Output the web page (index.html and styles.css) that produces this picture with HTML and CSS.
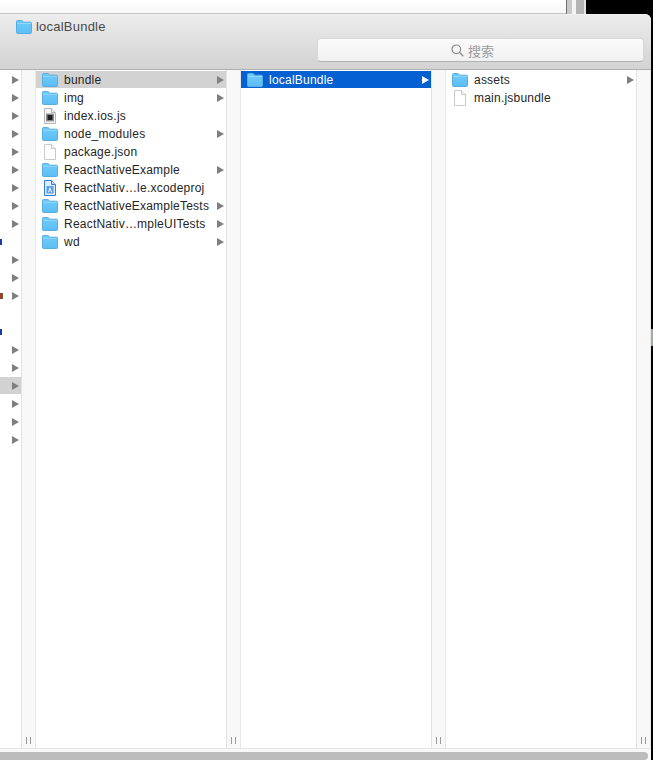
FILE: index.html
```html
<!DOCTYPE html>
<html lang="zh">
<head>
<meta charset="utf-8">
<title>localBundle</title>
<link rel="stylesheet" href="styles.css">
</head>
<body>
<svg class="defs" width="0" height="0" aria-hidden="true">
  <defs>
    <linearGradient id="fg" x1="0" y1="0" x2="0" y2="1"><stop offset="0" stop-color="#6fcbfb"/><stop offset="1" stop-color="#5dbdf3"/></linearGradient>
    <symbol id="folder" viewBox="0 0 16 14">
      <path d="M.5 12.5V1.5a1 1 0 0 1 1-1h4.2a1 1 0 0 1 .7.3L7.8 2.2h6.7a1 1 0 0 1 1 1v9.3a1 1 0 0 1-1 1h-13a1 1 0 0 1-1-1z" fill="url(#fg)" stroke="#58aee0"/>
      <path d="M1 3.5h14" stroke="#8fd8fc" fill="none"/>
    </symbol>
    <symbol id="doc" viewBox="0 0 16 16">
      <path d="M2.500.5h7l4 4v11h-11z" fill="#fff" stroke="#c9c9c9"/>
      <path d="M9.500.5v4h4" fill="#f4f4f4" stroke="#c9c9c9"/>
    </symbol>
    <symbol id="js" viewBox="0 0 16 16">
      <path d="M2.500.5h7l4 4v11h-11z" fill="#f6f6f6" stroke="#b5b5b5"/>
      <path d="M9.500.5v4h4" fill="#eee" stroke="#b5b5b5"/>
      <rect x="4" y="5.500" width="8" height="8" fill="#8f8f8f"/>
      <rect x="5.500" y="7" width="5" height="5" fill="#222"/>
    </symbol>
    <symbol id="proj" viewBox="0 0 16 16">
      <path d="M2.500.5h7l4 4v11h-11z" fill="#dcedfc" stroke="#2f80dd"/>
      <path d="M9.500.5v4h4" fill="#bcdcf8" stroke="#2f80dd"/>
      <rect x="4.500" y="6" width="7" height="7.500" fill="#5d9fe6"/>
      <path d="M8 6.800l-2 5.500h1l1-2.800 1 2.800h1z" fill="#fff"/>
    </symbol>
  </defs>
</svg>

<div class="backdrop">
  <div class="bd bd-a"></div><div class="bd bd-b"></div><div class="bd bd-c"></div><div class="bd bd-d"></div><div class="bd bd-e"></div><div class="bd bd-f"></div>
</div>
<div class="edge-mark"></div>

<main class="dialog">
  <header class="head">
    <div class="title">
      <svg class="ic-title"><use href="#folder"/></svg>
      <span>localBundle</span>
    </div>
    <div class="search">
      <svg class="lens" viewBox="0 0 13 13"><circle cx="5.300" cy="5.300" r="4.300" fill="none" stroke="#8a8a8a" stroke-width="1.200"/><path d="M8.500 8.500l3.800 3.800" stroke="#8a8a8a" stroke-width="1.300"/></svg>
      <span>搜索</span>
    </div>
  </header>

  <div class="panes">
    <div class="pane pane-0">
      <div class="row"><i class="arrow"></i></div>
      <div class="row"><i class="arrow"></i></div>
      <div class="row"><i class="arrow"></i></div>
      <div class="row"><i class="arrow"></i></div>
      <div class="row"><i class="arrow"></i></div>
      <div class="row"><i class="arrow"></i></div>
      <div class="row"><i class="arrow"></i></div>
      <div class="row"><i class="arrow"></i></div>
      <div class="row"><i class="arrow"></i></div>
      <div class="row"><b class="frag frag-blue"></b></div>
      <div class="row"><i class="arrow"></i></div>
      <div class="row"><i class="arrow"></i></div>
      <div class="row"><b class="frag frag-red"></b><i class="arrow"></i></div>
      <div class="row"></div>
      <div class="row"><b class="frag frag-blue"></b></div>
      <div class="row"><i class="arrow"></i></div>
      <div class="row"><i class="arrow"></i></div>
      <div class="row row-grey"><i class="arrow"></i></div>
      <div class="row"><i class="arrow"></i></div>
      <div class="row"><i class="arrow"></i></div>
      <div class="row"><i class="arrow"></i></div>
    </div>
    <div class="strip"><u></u><u></u></div>

    <div class="pane">
      <div class="row row-grey"><svg class="ic ic-f"><use href="#folder"/></svg><span class="name">bundle</span><i class="arrow"></i></div>
      <div class="row"><svg class="ic ic-f"><use href="#folder"/></svg><span class="name">img</span><i class="arrow"></i></div>
      <div class="row"><svg class="ic"><use href="#js"/></svg><span class="name">index.ios.js</span></div>
      <div class="row"><svg class="ic ic-f"><use href="#folder"/></svg><span class="name">node_modules</span><i class="arrow"></i></div>
      <div class="row"><svg class="ic"><use href="#doc"/></svg><span class="name">package.json</span></div>
      <div class="row"><svg class="ic ic-f"><use href="#folder"/></svg><span class="name">ReactNativeExample</span><i class="arrow"></i></div>
      <div class="row"><svg class="ic"><use href="#proj"/></svg><span class="name">ReactNativ…le.xcodeproj</span></div>
      <div class="row"><svg class="ic ic-f"><use href="#folder"/></svg><span class="name">ReactNativeExampleTests</span><i class="arrow"></i></div>
      <div class="row"><svg class="ic ic-f"><use href="#folder"/></svg><span class="name">ReactNativ…mpleUITests</span><i class="arrow"></i></div>
      <div class="row"><svg class="ic ic-f"><use href="#folder"/></svg><span class="name">wd</span><i class="arrow"></i></div>
    </div>
    <div class="strip"><u></u><u></u></div>

    <div class="pane">
      <div class="row row-blue"><svg class="ic ic-f"><use href="#folder"/></svg><span class="name">localBundle</span><i class="arrow"></i></div>
    </div>
    <div class="strip"><u></u><u></u></div>

    <div class="pane">
      <div class="row"><svg class="ic ic-f"><use href="#folder"/></svg><span class="name">assets</span><i class="arrow"></i></div>
      <div class="row"><svg class="ic"><use href="#doc"/></svg><span class="name">main.jsbundle</span></div>
    </div>
    <div class="strip"><u></u><u></u></div>
  </div>

  <footer class="foot"><div class="thumb"></div></footer>
</main>
</body>
</html>
```
FILE: styles.css
```css
* { box-sizing: border-box; }
html, body { margin: 0; padding: 0; height: 100%; }
body {
  position: relative;
  width: 653px;
  height: 760px;
  overflow: hidden;
  background: #000;
  font-family: "Liberation Sans", "Noto Sans CJK SC", sans-serif;
  font-size: 12px;
  color: #262626;
}
.defs { position: absolute; }

.backdrop { display: flex; height: 14px; width: 586px; }
.bd { height: 100%; }
.bd-a { width: 566px; background: linear-gradient(#fff, #f7f7f7); border-bottom: 1px solid #c4c4c4; }
.bd-b { width: 1px; background: #707070; }
.bd-c { width: 5px; background: #c9c9c9; }
.bd-d { width: 4px; background: #f4f4f4; }
.bd-e { width: 8px; background: #b4b4b4; }
.bd-f { width: 2px; background: #e2e2e2; }

.edge-mark {
  position: absolute; left: 651px; top: 329px; width: 2px; height: 17px;
  background: linear-gradient(#a8a8a8 0 52%, #8fb83c 52% 60%, #a8a8a8 60%);
}

.dialog {
  width: 651px;
  height: 746px;
  display: flex;
  flex-direction: column;
  border-top-right-radius: 6px;
  overflow: hidden;
  background: #fff;
}

.head {
  height: 56px;
  flex: none;
  background: linear-gradient(#ececec, #d3d3d3);
  border-bottom: 1px solid #b0b0b0;
  border-top: 1px solid #f0f0f0;
  padding: 5px 7px 5px 16px;
  display: flex;
  flex-direction: column;
}
.title { display: flex; align-items: center; gap: 4px; height: 14px; color: #4a4a4a; font-size: 13px; letter-spacing: .22px; line-height: 14px; }
.ic-title { width: 16px; height: 14px; flex: none; }
.search {
  margin-top: 4px;
  margin-left: 301px;
  height: 24px;
  background: linear-gradient(#fbfbfb, #f1f1f1);
  border: 1px solid #d8d8d8;
  border-bottom-color: #b2b2b2;
  border-radius: 4px;
  display: flex;
  align-items: center;
  justify-content: center;
  gap: 4px;
  padding-right: 16px;
  color: #9c9c9c;
  font-size: 13px;
  font-family: "Noto Sans CJK SC", sans-serif;
}
.lens { width: 13px; height: 13px; }

.panes { flex: 1; min-height: 0; display: flex; }
.pane { width: 190px; flex: none; padding-top: 1px; display: flex; flex-direction: column; gap: 1px; overflow: hidden; }
.pane-0 { width: 21px; }
.strip {
  width: 15px;
  flex: none;
  background: #f8f8f8;
  border-left: 1px solid #e3e3e3;
  border-right: 1px solid #e8e8e8;
  display: flex;
  align-items: flex-end;
  justify-content: center;
  gap: 3px;
  padding-bottom: 4px;
}
.strip u { display: block; width: 1px; height: 7px; background: #9a9a9a; }

.row { height: 17px; flex: none; display: flex; align-items: center; padding: 0 2px 0 6px; }
.pane-0 .row { padding: 0 2px 0 0; }
.row-grey { background: #d2d2d2; }
.row-blue { background: #0560d2; color: #fff; }
.ic { width: 16px; height: 16px; flex: none; }
.ic-f { height: 14px; }
.name { margin-left: 6px; white-space: nowrap; flex: 1; letter-spacing: .22px; }
.arrow {
  margin-left: auto;
  flex: none;
  width: 0; height: 0;
  border-left: 7px solid #7f7f7f;
  border-top: 4.500px solid transparent;
  border-bottom: 4.500px solid transparent;
}
.row-blue .arrow { border-left-color: #fff; }
.frag { width: 2px; height: 6px; flex: none; }
.frag-blue { background: #1b3aa5; }
.frag-red { width: 3px; background: #8a4a28; }

.foot { height: 12px; flex: none; background: #f8f8f8; border-top: 1px solid #e3e3e3; padding-top: 3px; padding-right: 3px; }
.thumb { height: 8px; background: #bcbcbc; border-radius: 0 4px 4px 0; }
```
